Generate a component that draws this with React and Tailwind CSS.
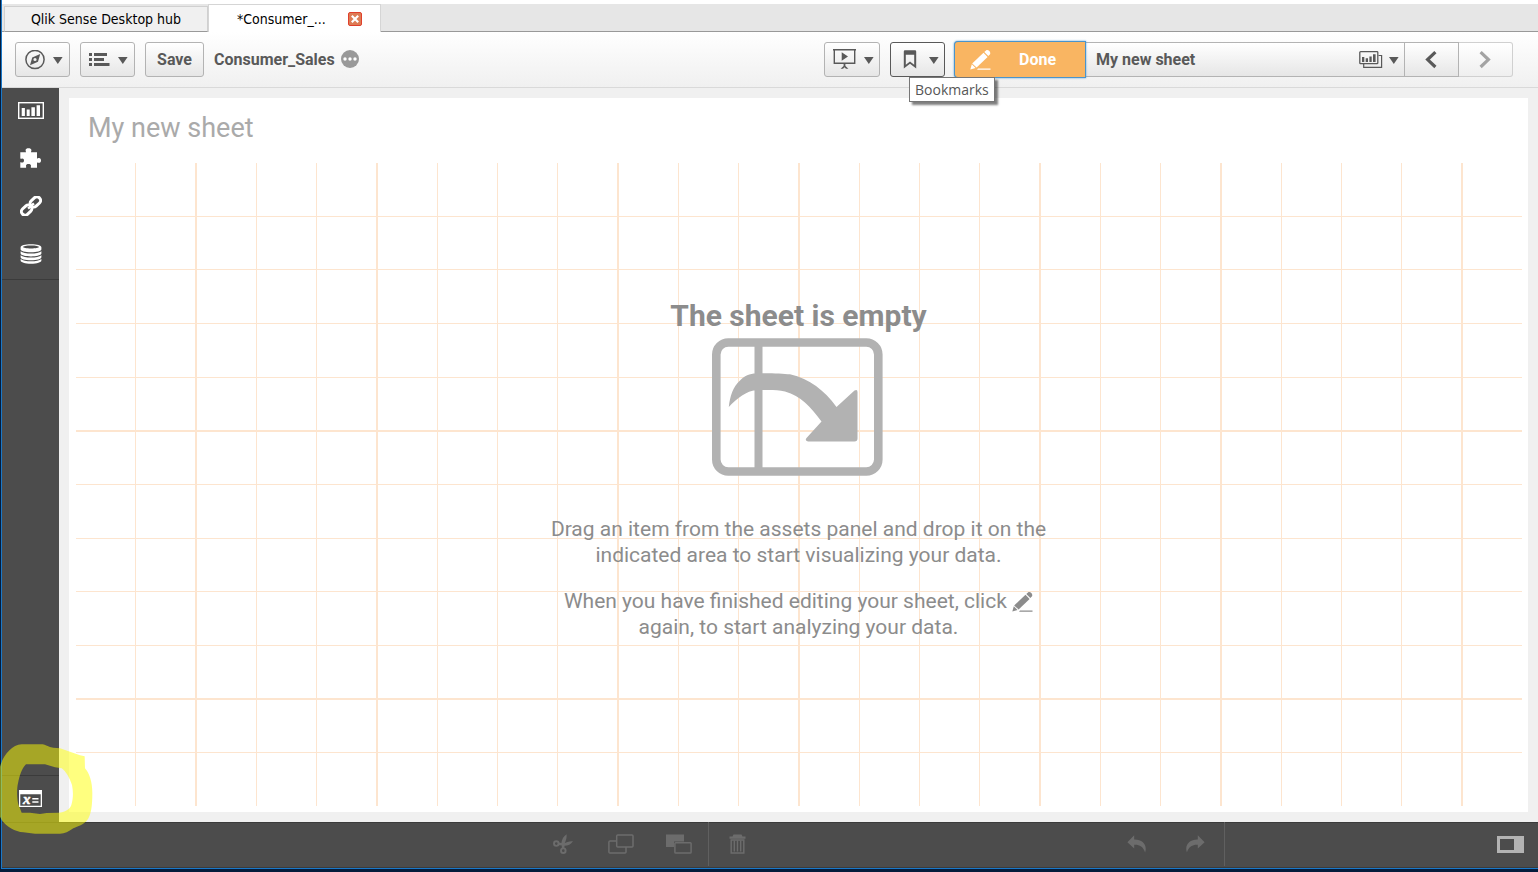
import React from "react";

const columnLines = Array.from({ length: 23 }, (_, i) => i + 1);
const rowLines = Array.from({ length: 11 }, (_, i) => i + 1);
const strongColumns = [2, 5, 9, 12, 16, 19, 23];
const strongRows = [5, 10];

const toolButton =
  "flex h-[35px] items-center justify-center rounded-[3px] border border-[#b3b3b3] bg-linear-to-b from-white to-[#e6e6e6] text-[#595959]";
const sideButton = "flex h-11 w-full items-center justify-center text-white";
const editButton = "flex h-11 w-[58px] items-center justify-center text-[#6c6c6c]";

function Caret() {
  return (
    <svg width="10" height="8" viewBox="0 0 10 8" fill="currentColor" aria-hidden="true">
      <path d="M0 1H9.6L4.8 8Z" />
    </svg>
  );
}

function PencilIcon({ className }) {
  return (
    <svg className={className} width="21" height="20" viewBox="0 0 21 20" fill="currentColor" aria-hidden="true">
      <path d="M14.3 2 16 .5C17 -.3 18.3 0 19.3 1.1 20.4 2.3 20.6 3.5 19.8 4.4L18.3 6Z" />
      <path d="M13.5 2.800 17.600 6.900 6.600 17.600 2.200 13.400Z" />
      <path d="M1.8 14.2 5.6 18 .3 19.4Z" />
      <path d="M8 18.6H20.5V19.8H7Z" />
    </svg>
  );
}

function CompassIcon() {
  return (
    <svg width="20" height="20" viewBox="0 0 20 20" aria-hidden="true">
      <circle cx="10" cy="9.5" r="9.1" fill="none" stroke="currentColor" strokeWidth="1.5" />
      <path fillRule="evenodd" fill="currentColor" d="M15.200 4.100 13 11.700 5 15.300 7.200 7.500ZM10 7.900A1.6 1.6 0 1 0 10 11.100 1.6 1.6 0 0 0 10 7.900Z" />
    </svg>
  );
}

function ListIcon() {
  return (
    <svg width="21" height="14" viewBox="0 0 21 14" fill="currentColor" aria-hidden="true">
      <path d="M0 0H3V3H0ZM0 5H3V8H0ZM0 10H3V13H0ZM5 0H18V3H5ZM5 5H15V8H5ZM5 10H20.500V13H5Z" />
    </svg>
  );
}

function PresentIcon() {
  return (
    <svg width="23" height="21" viewBox="0 0 23 21" fill="currentColor" aria-hidden="true">
      <path fillRule="evenodd" d="M0 0H23V1.500H22.4V15H.6V1.500H0ZM2 1.500V13.500H21V1.500Z" />
      <path d="M8.7 3.200 15 7.500 8.7 11.800ZM10.6 14.500H12.4V17L15.4 19.800H13L11.5 18.200 10 19.800H7.6L10.6 17Z" />
    </svg>
  );
}

function BookmarkIcon() {
  return (
    <svg width="14" height="20" viewBox="0 0 14 20" aria-hidden="true">
      <path fillRule="evenodd" fill="currentColor" d="M2 .2H12Q13.2 .2 13.2 1.500V18.500L7 13.800 .8 18.500V1.500Q.8 .2 2 .2ZM2.8 4.700V14.700L7 11.600 11.2 14.700V4.700Z" />
    </svg>
  );
}

function SheetsIcon() {
  return (
    <svg width="24" height="18" viewBox="0 0 24 18" aria-hidden="true">
      <path d="M19.5 4.500H22.6V16.300H4.7V13" fill="none" stroke="currentColor" strokeWidth="1.2" />
      <rect x=".8" y=".7" width="18" height="12" rx=".8" fill="none" stroke="currentColor" strokeWidth="1.3" />
      <path fill="currentColor" d="M3 6H5.3V11H3ZM6.7 7.300H9V11H6.7ZM10.4 5.400H12.7V11H10.4ZM14 3.300H16.6V11H14Z" />
    </svg>
  );
}

function ChevronIcon({ flip }) {
  return (
    <svg width="14" height="18" viewBox="0 0 14 18" aria-hidden="true">
      <path d={flip ? "M1.6 1.2 9.4 8.600 1.6 16" : "M10.4 1.2 2.6 8.600 10.4 16"} fill="none" stroke="currentColor" strokeWidth="3.2" />
    </svg>
  );
}

function ChartsIcon() {
  return (
    <svg width="26" height="17" viewBox="0 0 26 17" aria-hidden="true">
      <rect x=".7" y=".7" width="24.6" height="15.6" fill="none" stroke="currentColor" strokeWidth="1.4" />
      <path fill="currentColor" d="M3.7 6H6.9V14H3.7ZM8.7 7.5H11.7V14H8.7ZM13.4 5.2H16.9V14H13.4ZM18.6 3.2H22V14H18.6Z" />
    </svg>
  );
}

function PuzzleIcon() {
  return (
    <svg width="22" height="20" viewBox="0 0 22 20" fill="currentColor" aria-hidden="true">
      <path d="M.3 4.2H5.900C6.200 3.800 5.600 3.2 5.600 2.2 5.600.8 7 .2 8.500.2S11.400.8 11.400 2.2C11.400 3.2 10.800 3.800 11.100 4.2H17V10.400C17.400 10.600 18 9.900 19 9.900 20.4 9.900 21 11 21 12.400S20.2 14.800 19 14.800C18 14.800 17.400 14.200 17 14.500V19.800H11C10.6 19.300 11 18.600 11 17.800 11 16.500 10 15.900 8.500 15.900S6 16.500 6 17.800C6 18.600 6.400 19.300 6 19.800H.3V14.500C.7 14.100 1.4 14.600 2.2 14.600 3.400 14.600 4 13.800 4 12.500S3.400 10.400 2.2 10.400C1.4 10.400 .7 10.900 .3 10.500Z" />
    </svg>
  );
}

function LinkIcon() {
  return (
    <svg width="22" height="20" viewBox="0 0 22 20" fill="none" stroke="currentColor" strokeWidth="3" aria-hidden="true">
      <g transform="rotate(-43 11 10)">
        <rect x="-.7" y="6.4" width="11.500" height="7.200" rx="3.400" />
        <rect x="11.200" y="6.4" width="11.500" height="7.200" rx="3.400" />
        <path d="M7 10H15" strokeWidth="2.4" />
      </g>
    </svg>
  );
}

function DatabaseIcon() {
  return (
    <svg width="22" height="20" viewBox="0 0 22 20" fill="currentColor" aria-hidden="true">
      <path fillRule="evenodd" d="M11 .2C17 .2 21.4 1.500 21.4 3.2V5.200C21.4 7 17 8.300 11 8.300S.6 7 .6 5.200V3.2C.6 1.500 5 .2 11 .2ZM11 1.500C6.500 1.500 3 2.100 3 3S6.500 4.400 11 4.400 19 3.900 19 3 15.500 1.500 11 1.500Z" />
      <path d="M.6 7.200C2.500 8.900 6.500 9.600 11 9.600S19.500 8.900 21.400 7.200V9.400C21.400 11.100 17 12.400 11 12.400S.6 11.100.6 9.400Z" />
      <path d="M.6 11.200C2.500 12.700 6.500 13.500 11 13.500S19.500 12.700 21.400 11.200V13.200C21.400 14.900 17 16.200 11 16.200S.6 14.900.6 13.200Z" />
      <path d="M.6 15C2.500 16.500 6.500 17.300 11 17.300S19.500 16.500 21.400 15V16.400C21.400 18.200 17 19.800 11 19.800S.6 18.200.6 16.400Z" />
    </svg>
  );
}

function VariablesIcon() {
  return (
    <svg width="23" height="17" viewBox="0 0 23 17" fill="currentColor" aria-hidden="true">
      <path fillRule="evenodd" d="M0 0H23V17H0ZM1.300 4.300V15.800H21.700V4.300Z" />
      <text x="4" y="13.600" stroke="currentColor" strokeWidth=".5" className="font-['Liberation_Serif',serif] text-[15px] font-bold italic">x</text>
      <path d="M13.300 8H19.500V9.500H13.300ZM13.300 11.200H19.500V12.700H13.300Z" />
    </svg>
  );
}

function ScissorsIcon() {
  return (
    <svg width="20" height="20" viewBox="0 0 20 20" aria-hidden="true">
      <circle cx="3.300" cy="9.600" r="2.300" fill="none" stroke="currentColor" strokeWidth="1.900" />
      <circle cx="10.300" cy="16.700" r="2.300" fill="none" stroke="currentColor" strokeWidth="1.900" />
      <path fill="currentColor" d="M13.600.2C13.800 3.300 13.300 6 11.800 8.900L11.300 14.600 8.900 14.500 8.700 11.500 5.300 10.900 5.500 8.500 8.400 9C8.700 5.500 10.600 2.300 13.600.2ZM20 7.200C17.900 10.300 15.200 11.700 11.300 11.800L10.700 9.700C13.300 7.900 16.500 6.900 20 7.200Z" />
    </svg>
  );
}

function CopyIcon() {
  return (
    <svg width="26" height="20" viewBox="0 0 26 20" fill="none" stroke="currentColor" strokeWidth="1.500" aria-hidden="true">
      <rect x="8.700" y=".9" width="16.300" height="12" rx="1" />
      <path d="M8.500 7H2Q.9 7 .9 8V18Q.9 19 2 19H17Q18 19 18 18V13" />
    </svg>
  );
}

function PasteIcon() {
  return (
    <svg width="26" height="20" viewBox="0 0 26 20" aria-hidden="true">
      <path fill="currentColor" d="M0 .5H18V7.600H8V13H0Z" />
      <rect x="8.900" y="8.700" width="16.200" height="10.400" rx=".8" fill="none" stroke="currentColor" strokeWidth="1.500" />
    </svg>
  );
}

function TrashIcon() {
  return (
    <svg width="17" height="20" viewBox="0 0 17 20" aria-hidden="true">
      <path fill="currentColor" d="M4.500.4H12.500L13.500 2.500H16.500V4.700H.5V2.500H3.500Z" />
      <path d="M2.200 6V18.900H14.800V6Z" fill="none" stroke="currentColor" strokeWidth="1.500" />
      <path d="M5.300 6.500V17.500M8.500 6.500V17.500M11.700 6.500V17.500" stroke="currentColor" strokeWidth="1.400" />
    </svg>
  );
}

function ArrowIcon({ redo }) {
  return (
    <svg width="20" height="18" viewBox="0 0 20 18" fill="currentColor" aria-hidden="true">
      <path
        d={
          redo
            ? "M12.800.3 19.600 7.300 12.800 13.400V9.700C7.800 9.400 3.800 11.400 1.900 17.400 -.7 10 4.700 4.200 12.800 4.500Z"
            : "M7.200.3 .4 7.300 7.200 13.400V9.700C12.200 9.400 16.200 11.400 18.100 17.400 20.700 10 15.300 4.200 7.200 4.500Z"
        }
      />
    </svg>
  );
}

function TabBar() {
  return (
    <nav className="flex h-8 items-end bg-[#e6e6e6] pt-1 font-['DejaVu_Sans_Condensed','Noto_Sans',sans-serif] text-sm text-black shadow-[inset_0_4px_0_#fff,inset_0_-1px_0_#999]">
      <a href="#hub" className="ml-0.5 flex h-[26px] w-[204px] items-center justify-center border border-[#d0d0d0] border-b-[#999] bg-[#f0f0f0]">
        Qlik Sense Desktop hub
      </a>
      <div className="flex h-7 w-[173px] items-center border-x border-t border-[#d5d5d5] bg-white pl-7">
        <a href="#app">*Consumer_...</a>
        <button type="button" aria-label="Close tab" className="ml-[22px] flex size-3.5 items-center justify-center rounded-[2px] border border-[#e0402c] bg-[#dd7c55]">
          <svg width="8" height="8" viewBox="0 0 8 8" stroke="#fff" strokeWidth="2.200" aria-hidden="true">
            <path d="M.8 .8 7.200 7.200M7.200 .8 .8 7.200" />
          </svg>
        </button>
      </div>
    </nav>
  );
}

function Toolbar() {
  return (
    <header className="flex h-14 items-center border-b border-[#d9d9d9] bg-linear-to-b from-white to-[#f0f0f0] pr-[25px] pl-[13px] text-base font-bold text-[#595959]">
      <div className="flex items-center gap-2.5">
        <button type="button" aria-label="Navigation" className={`${toolButton} w-[55px] gap-2 pl-0.5`}>
          <CompassIcon />
          <Caret />
        </button>
        <button type="button" aria-label="Menu" className={`${toolButton} w-[55px] gap-2 pl-0.5`}>
          <ListIcon />
          <Caret />
        </button>
        <button type="button" className={`${toolButton} w-[59px]`}>Save</button>
        <div className="flex items-center gap-1.5">
          <span>Consumer_Sales</span>
          <button type="button" aria-label="App details">
            <svg className="block" width="18" height="20" viewBox="0 0 18 20" aria-hidden="true">
              <circle cx="9" cy="9" r="9" fill="#999" />
              <g fill="#fff">
                <circle cx="4" cy="9" r="1.700" />
                <circle cx="9" cy="9" r="1.700" />
                <circle cx="14" cy="9" r="1.700" />
              </g>
            </svg>
          </button>
        </div>
      </div>

      <div className="ml-auto flex items-center gap-2.5">
        <button type="button" aria-label="Storytelling" className={`${toolButton} w-14 gap-2 pl-0.5`}>
          <PresentIcon />
          <Caret />
        </button>
        <div className="relative">
          <button type="button" aria-label="Bookmarks" aria-describedby="bookmarks-tip" className="flex h-[35px] w-[55px] items-center justify-center gap-3 rounded-[3px] border border-[#595959] bg-linear-to-b from-white to-[#e6e6e6] pl-1.5 text-[#595959]">
            <BookmarkIcon />
            <Caret />
          </button>
          <div id="bookmarks-tip" role="tooltip" className="absolute top-[35px] left-[19px] z-10 border border-[#767676] bg-white px-[5px] font-['Open_Sans',sans-serif] text-sm leading-[23px] font-normal text-[#575757] shadow-[3px_3px_2px_#00000080]">
            Bookmarks
          </div>
        </div>
        <div className="flex items-center">
          <button type="button" className="relative flex h-[35px] w-[130px] items-center rounded-l-[3px] bg-[#f9b562] pl-[15px] text-white shadow-[0_0_0_1px_#4a94cc,0_0_2px_1px_#4a94cc]">
            <PencilIcon />
            <span className="ml-7">Done</span>
          </button>
          <button type="button" className="flex h-[35px] w-80 items-center border-y border-r border-[#b3b3b3] bg-linear-to-b from-white to-[#e6e6e6] pr-[5px] pl-[11px]">
            <span>My new sheet</span>
            <span className="ml-auto flex items-center gap-1.5">
              <SheetsIcon />
              <Caret />
            </span>
          </button>
          <button type="button" aria-label="Previous sheet" className="flex h-[35px] w-[54px] items-center justify-center border-y border-r border-[#b3b3b3] bg-linear-to-b from-white to-[#e6e6e6]">
            <ChevronIcon />
          </button>
          <button type="button" aria-label="Next sheet" className="flex h-[35px] w-[54px] items-center justify-center rounded-r-[3px] border-y border-r border-[#d0d0d0] bg-linear-to-b from-white to-[#efefef] text-[#a3a3a3]">
            <ChevronIcon flip />
          </button>
        </div>
      </div>
    </header>
  );
}

function Sidebar() {
  return (
    <aside className="relative flex w-[57px] shrink-0 flex-col justify-between bg-[#4c4c4c]">
      <div className="flex flex-col gap-1 border-b border-[#3b3b3b] pb-[3px]">
        <button type="button" aria-label="Charts" className={sideButton}><ChartsIcon /></button>
        <button type="button" aria-label="Custom objects" className={sideButton}><PuzzleIcon /></button>
        <button type="button" aria-label="Master items" className={sideButton}><LinkIcon /></button>
        <button type="button" aria-label="Fields" className={sideButton}><DatabaseIcon /></button>
      </div>
      <div className="border-t border-[#3b3b3b] pb-0.5">
        <button type="button" aria-label="Variables" className={sideButton}><VariablesIcon /></button>
      </div>
      <svg className="pointer-events-none absolute -bottom-3 -left-0.5 z-20" width="93" height="90" viewBox="0 0 279 270" aria-hidden="true">
        <path
          fill="#ffff00"
          fillOpacity=".5"
          fillRule="evenodd"
          d="M0 68C10 33 35 3 65 1L128 1C145 6 150 11 160 11L180 13 210 23 240 34 254 37 255 73C268 88 277 113 277 148 277 188 273 213 262 228 250 243 230 248 220 253 205 263 195 269 180 269.500L105 269.500 70 265C45 263 20 248 5 228L0 218ZM78 61C65 73 58 98 54 118 50 133 50 173 58 188L65 206H90L120 210 140 207 175 206C195 206 210 195 214 183 220 163 220 143 216 123 210 103 197 81 185 73L165 70 135 61Z"
        />
      </svg>
    </aside>
  );
}

function SheetGrid() {
  return (
    <svg className="absolute inset-0 size-full" stroke="#fde5cf" shapeRendering="crispEdges" aria-hidden="true">
      <g transform="translate(.5 .5)">
        {rowLines.map((n) => {
          const y = `${(n / 12) * 100}%`;
          return <line key={n} x1="0" x2="100%" y1={y} y2={y} strokeWidth={strongRows.includes(n) ? 2 : 1} />;
        })}
        {columnLines.map((n) => {
          const x = `${(n / 24) * 100}%`;
          return <line key={n} y1="0" y2="100%" x1={x} x2={x} strokeWidth={strongColumns.includes(n) ? 2 : 1} />;
        })}
      </g>
    </svg>
  );
}

function DropIllustration() {
  return (
    <svg width="174" height="138" viewBox="0 0 174 138" aria-hidden="true">
      <rect x="4.300" y="4.500" width="162" height="129" rx="12" fill="none" stroke="#b2b2b2" strokeWidth="8.600" />
      <path
        fill="#b2b2b2"
        d="M42.500 5H50.500V133H42.500ZM16.800 69C18 58 21 49 28 42.500 32 38 38 35.500 44 35.200 58 35 71 35.300 78 36.300 98 41 112 52 124.500 69L142.500 52.500Q145.500 51 145.500 54V100.500Q145.500 103.500 142.500 103.500H96Q92.500 103 94.500 100L109.500 83.500C98 68 89 58 73 53.500 65 51.500 58 52 44 52 35 53 25 60 16.800 69Z"
      />
    </svg>
  );
}

function Sheet() {
  return (
    <main className="flex grow flex-col bg-[#f0f0f0] p-2.5">
      <section className="flex grow flex-col bg-white px-1.5 pb-1.5">
        <h1 className="flex h-16 items-center pb-1 pl-[13px] text-[27px] text-[#aaa]">My new sheet</h1>
        <div className="relative grow">
          <SheetGrid />
          <div className="relative flex flex-col items-center pt-[136px] text-center text-[21px] leading-[26px] text-[#8c8c8c]">
            <h2 className="text-3xl leading-9 font-bold">The sheet is empty</h2>
            <div className="mt-1"><DropIllustration /></div>
            <p className="mt-10">
              Drag an item from the assets panel and drop it on the
              <br />
              indicated area to start visualizing your data.
            </p>
            <p className="mt-5">
              When you have finished editing your sheet, click <PencilIcon className="inline-block align-[-4px]" />
              <br />
              again, to start analyzing your data.
            </p>
          </div>
        </div>
      </section>
    </main>
  );
}

function EditBar() {
  return (
    <footer className="flex h-[46px] items-center border-t border-b border-[#3b3b3b] bg-[#4c4c4c] pb-0.5">
      <div className="flex w-[46%] justify-end border-r border-[#606060]">
        <button type="button" aria-label="Cut" className={editButton}><ScissorsIcon /></button>
        <button type="button" aria-label="Copy" className={editButton}><CopyIcon /></button>
        <button type="button" aria-label="Paste" className={editButton}><PasteIcon /></button>
      </div>
      <button type="button" aria-label="Delete" className={editButton}><TrashIcon /></button>
      <div className="ml-auto flex border-r border-[#606060]">
        <button type="button" aria-label="Undo" className={editButton}><ArrowIcon /></button>
        <button type="button" aria-label="Redo" className={editButton}><ArrowIcon redo /></button>
      </div>
      <div className="flex w-[313px] justify-end pr-3.5">
        <button type="button" aria-label="Toggle properties panel" className="text-[#b3b3b3]">
          <svg className="block" width="27" height="17" viewBox="0 0 27 17" aria-hidden="true">
            <path fillRule="evenodd" fill="currentColor" d="M0 0H27V17H0ZM3 3V14H17V3Z" />
          </svg>
        </button>
      </div>
    </footer>
  );
}

export default function App() {
  return (
    <div className="flex min-h-screen flex-col border-b-[3px] border-l border-[#041c3c] bg-white font-['Roboto','Noto_Sans',sans-serif]">
      <div className="flex grow flex-col border-b border-l border-[#1a78c8]">
        <TabBar />
        <Toolbar />
        <div className="flex grow">
          <Sidebar />
          <Sheet />
        </div>
        <EditBar />
      </div>
    </div>
  );
}
